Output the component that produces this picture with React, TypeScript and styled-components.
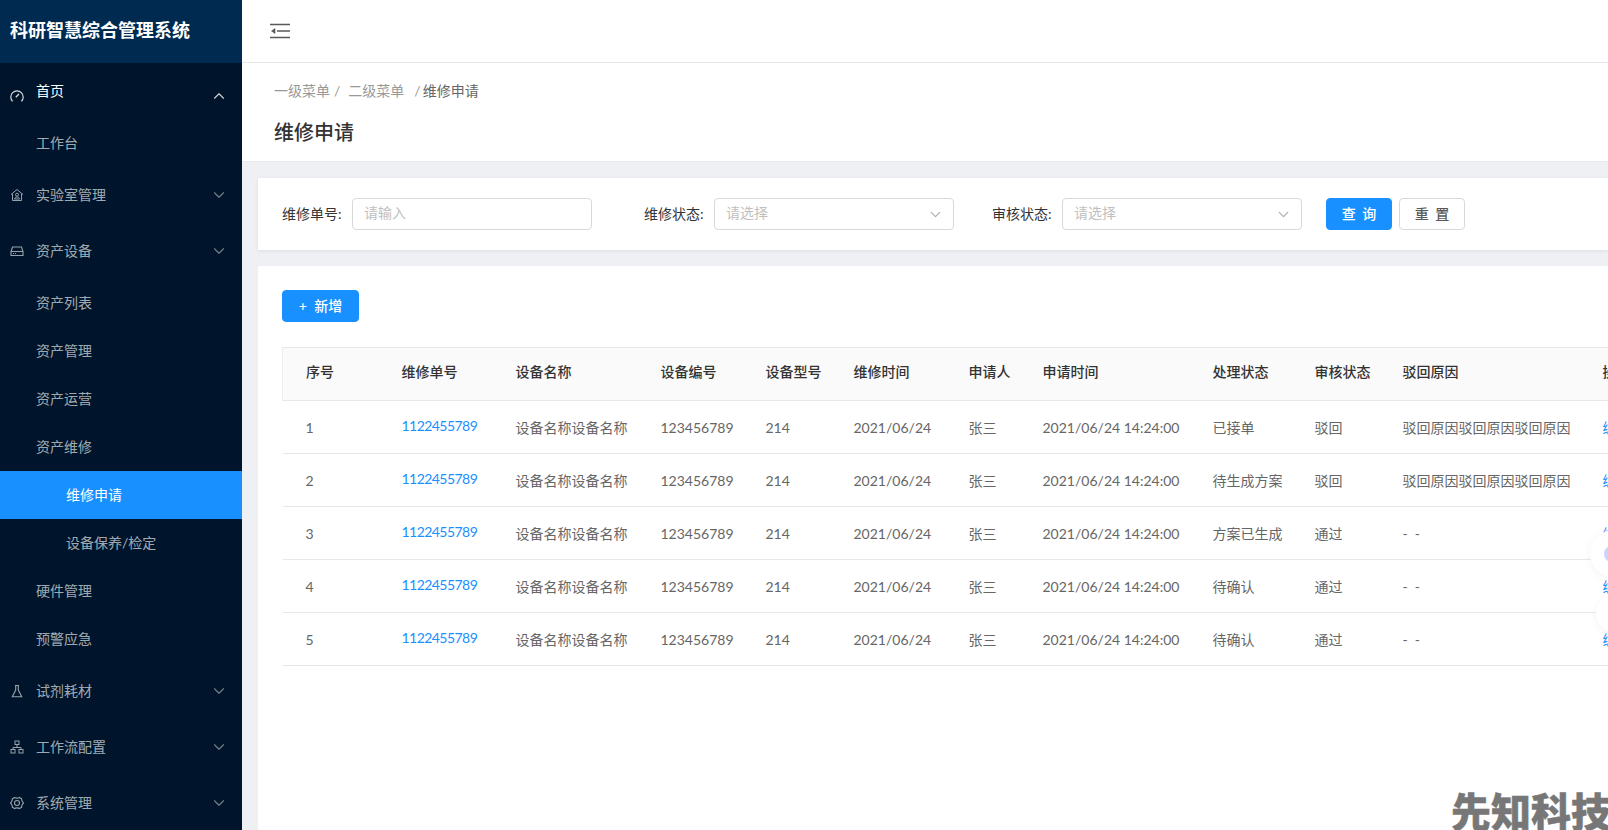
import React from 'react';
import styled, { createGlobalStyle } from 'styled-components';
import { ChevronDown, ChevronUp } from 'lucide-react';

const FONT = `Lato, "Noto Sans CJK SC", sans-serif`;

const GlobalStyle = createGlobalStyle`
  html, body {
    margin: 0;
    height: 100%;
    overflow: hidden;
  }
  body {
    font-family: ${FONT};
    font-size: 14px;
    color: #666;
  }
`;

const Page = styled.div`
  display: flex;
  height: 830px;
  width: 1608px;
  overflow: hidden;
  position: relative;
`;

const Sider = styled.aside`
  flex: 0 0 242px;
  background: #00152b;
  display: flex;
  flex-direction: column;
`;

const Logo = styled.div`
  flex: 0 0 63px;
  background: #002a4f;
  color: #fff;
  font-size: 18px;
  font-weight: 700;
  line-height: 60px;
  padding-left: 10px;
`;

const MenuRow = styled.div<{ $top?: boolean; $indent: number; $active?: boolean; $bright?: boolean }>`
  flex: 0 0 ${(p) => (p.$top ? 56 : 48)}px;
  box-sizing: border-box;
  display: flex;
  align-items: center;
  padding: 0 0 2px ${(p) => p.$indent}px;
  position: relative;
  background: ${(p) => (p.$active ? '#1890ff' : 'transparent')};
  color: ${(p) => (p.$active || p.$bright ? '#fff' : 'rgba(255, 255, 255, 0.65)')};
`;

const MenuIcon = styled.span<{ $drop?: boolean }>`
  position: absolute;
  left: 10px;
  top: 50%;
  width: 14px;
  height: 14px;
  margin-top: ${(p) => (p.$drop ? -2 : -7)}px;
  display: flex;
  opacity: ${(p) => (p.$drop ? 0.85 : 0.6)};
  svg {
    width: 14px;
    height: 14px;
  }
`;

const MenuArrow = styled.span<{ $drop?: boolean }>`
  position: absolute;
  left: 210px;
  top: 50%;
  margin-top: ${(p) => (p.$drop ? -4 : -9)}px;
  display: flex;
  color: ${(p) => (p.$drop ? 'rgba(255,255,255,0.8)' : 'rgba(255,255,255,0.45)')};
`;

const Main = styled.main`
  flex: 1;
  min-width: 0;
  display: flex;
  flex-direction: column;
  background: #eff0f4;
`;

const TopBar = styled.header`
  flex: 0 0 63px;
  box-sizing: border-box;
  background: #fff;
  border-bottom: 1px solid #e8e8ea;
  display: flex;
  align-items: center;
  padding-left: 28px;
`;

const PageHead = styled.div`
  flex: 0 0 99px;
  box-sizing: border-box;
  background: #fff;
  border-bottom: 1px solid #e9e9ec;
  padding: 17px 0 0 32px;
`;

const Crumbs = styled.div`
  display: flex;
  height: 22px;
  line-height: 22px;
  color: #999;
`;

const Crumb = styled.span<{ $gap?: number; $current?: boolean }>`
  margin-right: ${(p) => p.$gap ?? 0}px;
  color: ${(p) => (p.$current ? '#666' : '#999')};
`;

const PageTitle = styled.h1`
  margin: 16px 0 0;
  font-size: 20px;
  line-height: 28px;
  font-weight: 500;
  color: #333;
`;

const Content = styled.div`
  flex: 1;
  display: flex;
  flex-direction: column;
  gap: 16px;
  padding: 16px 0 0 16px;
  min-height: 0;
`;

const FilterCard = styled.section`
  flex: 0 0 72px;
  box-sizing: border-box;
  background: #fff;
  box-shadow: 0 1px 4px rgba(0, 21, 41, 0.08);
  display: flex;
  align-items: center;
  padding-left: 24px;
`;

const Field = styled.div<{ $after: number }>`
  display: flex;
  align-items: center;
  margin-right: ${(p) => p.$after}px;
`;

const FieldLabel = styled.label`
  width: 60px;
  margin-right: 10px;
  padding-bottom: 3px;
  color: #333;
  white-space: nowrap;
`;

const InputBox = styled.div`
  width: 240px;
  height: 32px;
  box-sizing: border-box;
  border: 1px solid #d9d9d9;
  border-radius: 4px;
  padding: 0 9px 0 11px;
  display: flex;
  align-items: center;
  justify-content: space-between;
  color: #bfbfbf;
`;

const Placeholder = styled.span`
  margin-bottom: 4px;
`;

const Button = styled.button<{ $primary?: boolean; $width: number }>`
  width: ${(p) => p.$width}px;
  height: 32px;
  padding: 0 0 2px;
  border-radius: 4px;
  border: 1px solid ${(p) => (p.$primary ? '#1890ff' : '#d9d9d9')};
  background: ${(p) => (p.$primary ? '#1890ff' : '#fff')};
  color: ${(p) => (p.$primary ? '#fff' : '#595959')};
  font: inherit;
  font-weight: 500;
  word-spacing: 3px;
  margin-right: 7px;
`;

const TableCard = styled.section`
  flex: 1;
  background: #fff;
  padding: 24px 0 0 24px;
  overflow: hidden;
`;

const AddButton = styled(Button)`
  display: block;
  margin: 0 0 25px;
  word-spacing: 4px;
`;

const Table = styled.table`
  border-collapse: collapse;
  table-layout: fixed;
  width: 1327px;
  max-width: none;
`;

const HeadCell = styled.th`
  box-sizing: border-box;
  height: 53px;
  padding: 0 0 6px 0;
  background: #fafafa;
  border-top: 1px solid #e8e8e8;
  border-bottom: 1px solid #e8e8e8;
  text-align: left;
  font-weight: 500;
  color: #333;
  white-space: nowrap;
  &:first-child {
    padding-left: 23px;
    border-left: 1px solid #eee;
  }
`;

const BodyCell = styled.td`
  box-sizing: border-box;
  height: 53px;
  padding: 0;
  border-bottom: 1px solid #e8e8e8;
  white-space: nowrap;
  color: #666;
  &:first-child {
    padding-left: 23px;
  }
`;

const Link = styled.a`
  display: inline-block;
  margin-bottom: 3px;
  letter-spacing: -0.55px;
  color: #1890ff;
`;

const ActionLink = styled.a`
  color: #1890ff;
`;

const FloatBall = styled.div<{ $top: number; $left: number; $size: number }>`
  position: absolute;
  top: ${(p) => p.$top}px;
  left: ${(p) => p.$left}px;
  width: ${(p) => p.$size}px;
  height: ${(p) => p.$size}px;
  border-radius: 50%;
  background: #fff;
  box-shadow: 0 2px 8px rgba(0, 0, 0, 0.05);
  display: flex;
  align-items: center;
  padding-left: 13px;
  box-sizing: border-box;
`;

const Watermark = styled.div`
  position: absolute;
  right: -3px;
  top: 785px;
  font-size: 40px;
  line-height: 54px;
  font-weight: 900;
  color: #777;
  -webkit-text-stroke: 0.5px #777;
  white-space: nowrap;
`;

const GaugeIcon = () => (
  <svg viewBox="0 0 14 14" fill="none" stroke="#fff" strokeWidth="1.2">
    <path d="M2.6 12.4A6.2 6.2 0 1 1 11.4 12.4" />
    <path d="M5.8 8.2 9 5" strokeWidth="1.4" />
  </svg>
);

const LabIcon = () => (
  <svg viewBox="0 0 14 14" fill="none" stroke="#fff" strokeWidth="1">
    <path d="M1 6.5 7 1.5l6 5M2.5 6v6.5h9V6" />
    <circle cx="7" cy="6.7" r="1.5" />
    <path d="M4.5 11c.4-1.5 1.3-2 2.5-2s2.1.5 2.5 2z" />
  </svg>
);

const DriveIcon = () => (
  <svg viewBox="0 0 14 14" fill="none" stroke="#fff" strokeWidth="1.1">
    <path d="M1 7.5 2.5 3h9L13 7.5v4H1zM1 7.5h12" />
    <path d="M3 9.5h1M5 9.5h1" />
  </svg>
);

const FlaskIcon = () => (
  <svg viewBox="0 0 14 14" fill="none" stroke="#fff" strokeWidth="1.1">
    <path d="M5 1.5h4M5.7 1.5v4.5L2.3 12.8h9.4L8.3 6V1.5" />
  </svg>
);

const FlowIcon = () => (
  <svg viewBox="0 0 14 14" fill="none" stroke="#fff" strokeWidth="1">
    <rect x="5" y="1" width="4" height="3.5" />
    <rect x="1" y="9.5" width="4" height="3.5" />
    <rect x="9" y="9.5" width="4" height="3.5" />
    <path d="M7 4.5v3M3 9.5v-2h8v2" />
  </svg>
);

const GearIcon = () => (
  <svg viewBox="0 0 14 14" fill="none" stroke="#fff" strokeWidth="1.1" strokeLinejoin="round">
    <path d="M4.6 1.4c.9 1 3.9 1 4.8 0l2.3 1.3c-.4 1.3 1.1 3.9 2 4.3-.9.4-2.4 3-2 4.3l-2.3 1.3c-.9-1-3.9-1-4.8 0l-2.3-1.3c.4-1.3-1.1-3.9-2-4.3.9-.4 2.4-3 2-4.3z" />
    <circle cx="7" cy="7" r="2.5" />
  </svg>
);

const FoldIcon = () => (
  <svg width="20" height="16" viewBox="0 0 20 16" fill="none" stroke="#595959" strokeWidth="1.4">
    <path d="M0 1.5h20M7 8h13M0 14.5h20" />
    <path d="M5 5.5 1.5 8 5 10.5z" fill="#595959" strokeWidth="0.6" />
  </svg>
);

const BallIcon = () => (
  <svg width="14" height="18" viewBox="0 0 14 18">
    <circle cx="9" cy="9" r="8" fill="#c9d4ff" />
    <circle cx="9" cy="9" r="4" fill="#eef1ff" />
  </svg>
);

type MenuItem = {
  label: string;
  level: 1 | 2 | 3;
  icon?: React.ReactNode;
  open?: boolean;
  active?: boolean;
};

const menu: MenuItem[] = [
  { label: '首页', level: 1, icon: <GaugeIcon />, open: true },
  { label: '工作台', level: 2 },
  { label: '实验室管理', level: 1, icon: <LabIcon /> },
  { label: '资产设备', level: 1, icon: <DriveIcon /> },
  { label: '资产列表', level: 2 },
  { label: '资产管理', level: 2 },
  { label: '资产运营', level: 2 },
  { label: '资产维修', level: 2 },
  { label: '维修申请', level: 3, active: true },
  { label: '设备保养/检定', level: 3 },
  { label: '硬件管理', level: 2 },
  { label: '预警应急', level: 2 },
  { label: '试剂耗材', level: 1, icon: <FlaskIcon /> },
  { label: '工作流配置', level: 1, icon: <FlowIcon /> },
  { label: '系统管理', level: 1, icon: <GearIcon /> },
];

const columns = [
  { title: '序号', width: 119 },
  { title: '维修单号', width: 114 },
  { title: '设备名称', width: 145 },
  { title: '设备编号', width: 105 },
  { title: '设备型号', width: 88 },
  { title: '维修时间', width: 115 },
  { title: '申请人', width: 74 },
  { title: '申请时间', width: 170 },
  { title: '处理状态', width: 102 },
  { title: '审核状态', width: 88 },
  { title: '驳回原因', width: 200 },
  { title: '操作', width: 100 },
];

const REASON = '驳回原因驳回原因驳回原因';
const EMPTY = '-\u00a0\u00a0-';

const rows = [
  { no: 1, person: '张三', status: '已接单', audit: '驳回', reason: REASON },
  { no: 2, person: '张三', status: '待生成方案', audit: '驳回', reason: REASON },
  { no: 3, person: '张三', status: '方案已生成', audit: '通过', reason: EMPTY },
  { no: 4, person: '张三', status: '待确认', audit: '通过', reason: EMPTY },
  { no: 5, person: '张三', status: '待确认', audit: '通过', reason: EMPTY },
];

export default function App() {
  return (
    <>
      <GlobalStyle />
      <Page>
        <Sider>
          <Logo>科研智慧综合管理系统</Logo>
          {menu.map((item) => (
            <MenuRow
              key={item.label}
              $top={item.level === 1}
              $indent={item.level === 3 ? 66 : 36}
              $active={item.active}
              $bright={item.open}
            >
              {item.icon && <MenuIcon $drop={item.open}>{item.icon}</MenuIcon>}
              {item.label}
              {item.level === 1 && (
                <MenuArrow $drop={item.open}>
                  {item.open ? (
                    <ChevronUp size={18} strokeWidth={1.5} />
                  ) : (
                    <ChevronDown size={18} strokeWidth={1.5} />
                  )}
                </MenuArrow>
              )}
            </MenuRow>
          ))}
        </Sider>

        <Main>
          <TopBar>
            <FoldIcon />
          </TopBar>
          <PageHead>
            <Crumbs>
              <Crumb $gap={4}>一级菜单</Crumb>
              <Crumb $gap={8}>/</Crumb>
              <Crumb $gap={10}>二级菜单</Crumb>
              <Crumb $gap={2}>/</Crumb>
              <Crumb $current>维修申请</Crumb>
            </Crumbs>
            <PageTitle>维修申请</PageTitle>
          </PageHead>

          <Content>
            <FilterCard>
              <Field $after={52}>
                <FieldLabel>维修单号:</FieldLabel>
                <InputBox>
                  <Placeholder>请输入</Placeholder>
                </InputBox>
              </Field>
              <Field $after={38}>
                <FieldLabel>维修状态:</FieldLabel>
                <InputBox>
                  <Placeholder>请选择</Placeholder>
                  <ChevronDown size={17} strokeWidth={1.8} color="#b0b0b0" />
                </InputBox>
              </Field>
              <Field $after={24}>
                <FieldLabel>审核状态:</FieldLabel>
                <InputBox>
                  <Placeholder>请选择</Placeholder>
                  <ChevronDown size={17} strokeWidth={1.8} color="#b0b0b0" />
                </InputBox>
              </Field>
              <Button $primary $width={66}>查 询</Button>
              <Button $width={66}>重 置</Button>
            </FilterCard>

            <TableCard>
              <AddButton $primary $width={77}>+ 新增</AddButton>
              <Table>
                <colgroup>
                  {columns.map((c) => (
                    <col key={c.title} width={c.width} />
                  ))}
                </colgroup>
                <thead>
                  <tr>
                    {columns.map((c) => (
                      <HeadCell key={c.title}>{c.title}</HeadCell>
                    ))}
                  </tr>
                </thead>
                <tbody>
                  {rows.map((r) => (
                    <tr key={r.no}>
                      <BodyCell>{r.no}</BodyCell>
                      <BodyCell><Link>1122455789</Link></BodyCell>
                      <BodyCell>设备名称设备名称</BodyCell>
                      <BodyCell>123456789</BodyCell>
                      <BodyCell>214</BodyCell>
                      <BodyCell>2021/06/24</BodyCell>
                      <BodyCell>{r.person}</BodyCell>
                      <BodyCell>2021/06/24 14:24:00</BodyCell>
                      <BodyCell>{r.status}</BodyCell>
                      <BodyCell>{r.audit}</BodyCell>
                      <BodyCell>{r.reason}</BodyCell>
                      <BodyCell><ActionLink>编辑</ActionLink></BodyCell>
                    </tr>
                  ))}
                </tbody>
              </Table>
            </TableCard>
          </Content>
        </Main>

        <FloatBall $top={530} $left={1590} $size={47}>
          <BallIcon />
        </FloatBall>
        <FloatBall $top={595} $left={1596} $size={37} />
        <Watermark>先知科技</Watermark>
      </Page>
    </>
  );
}
